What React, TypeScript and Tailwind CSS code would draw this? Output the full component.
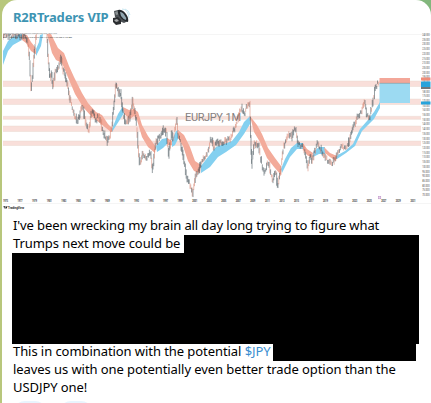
type Point = [number, number];

// Monthly price path, in chart pixels
const pricePath: Point[][] = [
  [[3, 37], [4, 34], [9, 36], [14, 34], [20, 37], [24, 35], [28, 40], [30, 60], [31.5, 87], [33, 76], [35, 50], [37, 34]],
  [[47, 34], [49, 62], [50, 78], [52, 74], [53.5, 86], [56, 72], [59, 67], [61.5, 56], [63, 68], [65, 74], [67, 82], [70, 98], [73, 110], [78, 122], [80, 114], [83, 107], [86, 122], [89, 131], [91, 118], [93, 110], [96, 120], [100, 117], [104, 133], [108, 142], [112, 131], [114, 108], [116, 88], [117, 85], [119, 94], [121, 93], [123, 110], [126, 124], [130, 119], [133, 100], [135, 110], [137, 127], [140, 163], [143, 155], [147, 157], [151, 153], [153, 170], [156, 143], [161, 137], [164, 129], [167, 133], [169, 155], [172, 134], [174, 139], [177, 118], [178, 133], [181, 143], [183, 153], [187, 177], [190, 182], [193, 193], [196, 175], [199, 172], [201, 163], [207, 155], [212, 138], [214, 147], [217, 143], [224, 142], [231, 138], [237, 123], [242, 108], [245, 113], [247, 108], [250, 103], [251, 137], [252, 165], [255, 143], [259, 147], [264, 173], [269, 163], [273, 180], [276, 170], [278, 187], [281, 172], [283, 153], [288, 134], [292, 137], [296, 128], [298, 142], [304, 147], [308, 167], [310, 157], [313, 160], [318, 143], [322, 150], [330, 163], [335, 161], [337, 155], [342, 145], [347, 149], [353, 130], [358, 118], [362, 110], [365, 101], [367, 114], [370, 118], [373, 103], [376, 87], [379, 83]],
];

const levels = [
  { y: 81, h: 5.5 },
  { y: 99, h: 5.5 },
  { y: 116.3, h: 3 },
  { y: 126, h: 5.5 },
  { y: 141, h: 4.5 },
];

const ribbons = [
  { up: true, points: '3,51 8,41 14,36 22,34 22,40 13,45 8,51 3,65' },
  { up: false, points: '22,34 27,35 31,42 35,47 37,55 31,51 26,43 22,40' },
  { up: true, points: '36,49 39,42 40,35 43,34 41,46 36,56' },
  { up: false, points: '47,34 51,34 58,48 64,53 69,66 74,77 82,93 88,103 96,112 102,115 108,124 113,129 111,132 101,124 91,116 83,107 75,94 67,75 62,63 56,60 52,53' },
  { up: true, points: '112,129 118,114 123,106 124,113 119,121 112,132' },
  { up: false, points: '123,107 129,110 134,109 138,112 142,125 148,136 156,147 155,153 148,147 142,137 137,120 134,116 130,119 124,114' },
  { up: true, points: '156,146 162,139 167,138 168,143 163,148 157,152' },
  { up: false, points: '167,138 172,141 172,145 168,145' },
  { up: true, points: '172,140 176,131 179,130 179,137 175,145 172,147' },
  { up: false, points: '178,130 184,135 190,147 195,161 201,165 200,173 194,171 188,161 183,146 178,138' },
  { up: true, points: '201,166 208,157 216,147 224,144 232,141 239,132 244,122 250,116 250,124 244,134 236,145 226,152 218,157 210,167 201,173' },
  { up: false, points: '250,116 257,125 262,134 268,148 275,158 281,166 281,175 274,167 267,158 260,142 254,132' },
  { up: true, points: '281,169 285,159 291,148 297,143 303,143 303,149 297,149 290,157 282,173' },
  { up: false, points: '303,143 307,149 313,153 312,158 307,155 303,149' },
  { up: true, points: '313,152 319,147 325,147 325,154 319,154 313,157' },
  { up: false, points: '324,147 330,153 337,156 336,161 330,157 325,153' },
  { up: true, points: '336,156 345,151 353,144 360,129 367,121 374,112 380,102 380,108 374,119 368,125 362,131 355,146 346,153 337,159' },
];

const years = Array.from({ length: 29 }, (_, i) => ({ x: 5.5 + i * 14.55, label: String(1975 + i * 2) }));
const prices = Array.from({ length: 35 }, (_, i) => ({ y: 36 + i * 4.71, label: `${240 - i * 5}.000` }));

function noise(n: number) {
  const v = Math.sin(n * 127.1) * 43758.5453;
  return v - Math.floor(v) - 0.5;
}

function buildCandles(line: Point[]) {
  const candles: { x: number; y1: number; y2: number; up: boolean }[] = [];
  for (let i = 1; i < line.length; i++) {
    const [x0, y0] = line[i - 1];
    const [x1, y1] = line[i];
    const steps = Math.max(2, Math.round((x1 - x0) / 0.8));
    for (let s = 0; s < steps; s++) {
      const x = x0 + ((x1 - x0) * s) / steps;
      const a = y0 + ((y1 - y0) * s) / steps + noise(x) * 6;
      const b = y0 + ((y1 - y0) * (s + 1)) / steps + noise(x + 3) * 6;
      candles.push({ x, y1: Math.max(34, Math.min(a, b) - 1.5), y2: Math.max(a, b) + 1.5, up: noise(x + 9) > -0.12 });
    }
  }
  return candles;
}

const candles = pricePath.flatMap(buildCandles);

function SpeakerIcon() {
  return (
    <svg className="h-[19px] w-[19px]" viewBox="0 0 19 19">
      <path d="M2 3l4-1 4 4 6 7-4 2-5-2-4-4z" fill="#4b5054" />
      <path d="M3 4l3-1 2 3-4 1z" fill="#8b9193" />
      <path d="M6 2q4-1 8 4 3 4 2 8-5-1-8-5Q5 5 6 2z" fill="#23282c" />
      <path d="M8 4q3 0 5 4 2 2 1 4-3-1-5-4z" fill="#8fa5af" />
      <path d="M1 10l5-1 3 3v4l-5 1-3-3z" fill="#2c2e31" />
      <path d="M2 12l3-1 2 2-3 1z" fill="#a6a8a9" />
      <path d="M10 1q6 0 7 9M13 1q4 1 5 6" fill="none" stroke="#c3e4ef" strokeWidth="0.9" />
    </svg>
  );
}

function PriceChart() {
  return (
    <svg className="block h-[180px] w-[428px]" viewBox="3 33 428 180" fontFamily="Roboto, sans-serif">
      <path d="M3 34.5H431M3 203.5H431" stroke="#f1f1f1" strokeWidth="0.7" />
      {levels.map((level) => (
        <g key={level.y}>
          <rect x="3" y={level.y} width="418" height={level.h} fill="#f9dfda" />
          <path d={`M3 ${level.y}H421M3 ${level.y + level.h}H421`} stroke="#e6d3ca" strokeWidth="0.4" />
        </g>
      ))}
      <text x="185" y="121" fontSize="11" fill="#85807f" textLength="56">EURJPY, 1M</text>
      {ribbons.map((r) => (
        <polygon key={r.points} points={r.points} fill={r.up ? '#84d0f0' : '#f3ab9a'} />
      ))}
      {candles.map((c, i) => (
        <path key={i} d={`M${c.x} ${c.y1}V${c.y2}`} stroke={c.up ? '#3c4b52' : '#d5806c'} strokeWidth="0.6" strokeOpacity="0.9" />
      ))}
      <rect x="379.5" y="78" width="30.5" height="5" fill="#f3a799" />
      <rect x="379.5" y="83" width="30.5" height="20" fill="#9cdaf2" />
      <path d="M379.5 83.3H410" stroke="#8a8f90" strokeWidth="0.6" />
      <text x="3" y="34.2" fontSize="2.3" fill="#777" textLength="54" lengthAdjust="spacingAndGlyphs">TradingView chart published on TradingView.com, 2024 UTC</text>
      <text x="3" y="37.5" fontSize="2.3" fill="#444" textLength="69" lengthAdjust="spacingAndGlyphs">Euro / Japanese Yen, 1M, FXCM  O163.248 H164.302 L162.600 C163.880</text>
      {prices.map((p) => (
        <text key={p.label} x="422.3" y={p.y} fontSize="2.7" fill="#444" textLength="7.2" lengthAdjust="spacingAndGlyphs">{p.label}</text>
      ))}
      <rect x="421" y="77.5" width="9.5" height="3" fill="#ef8c79" />
      <rect x="421" y="81.5" width="9.5" height="5.5" fill="#27a3db" />
      <rect x="421" y="87" width="9.5" height="2" fill="#72777a" />
      <rect x="421" y="101.5" width="9.5" height="3" fill="#27a3db" />
      {years.map((y) => (
        <text key={y.label} x={y.x} y="202.1" fontSize="2.8" fontWeight="700" fill="#333" textAnchor="middle" textLength="5" lengthAdjust="spacingAndGlyphs">{y.label}</text>
      ))}
      <rect x="378.4" y="196.4" width="2.4" height="2.4" fill="#ead6ee" stroke="#b98ac3" strokeWidth="0.5" />
      <path d="M3.5 206.3h2v2.3h-1v-1.4h-1zM6.4 206.3h1.2l-1 2.3h-.9z" fill="#111" />
      <text x="8" y="208.6" fontSize="3" fontWeight="700" fill="#222" textLength="16" lengthAdjust="spacingAndGlyphs">TradingView</text>
    </svg>
  );
}

export default function App() {
  return (
    <div className="h-[403px] w-[431px] overflow-hidden bg-gradient-to-r from-[#b8c77c] to-[#82b77d] pl-[2px] font-['Noto_Sans',sans-serif]">
      <div className="h-full overflow-hidden rounded-t-[15px] bg-white">
        <header className="flex h-[33px] items-center gap-[4px] pl-[11px] pt-[1px]">
          <h1 className="w-[95px] whitespace-nowrap text-[13px] font-bold leading-[18px] tracking-[-0.18px] text-[#3d94b3]">R2RTraders VIP</h1>
          <SpeakerIcon />
        </header>
        <div className="pl-px">
          <PriceChart />
        </div>

        {/* Message body */}
        <div className="pl-[10px] pt-[3px] text-[13px] leading-[18px] tracking-[-0.07px] text-black">
          <p className="whitespace-nowrap pl-px tracking-[-0.115px]">I've been wrecking my brain all day long trying to figure what</p>
          <div className="flex h-[18px]">
            <p className="w-[172px] whitespace-nowrap pl-px">Trumps next move could be</p>
            <div className="mt-px h-[18px] w-[235px] bg-black" />
          </div>
          <div className="mt-px h-[91px] w-[407px] bg-black" />
          <div className="-mt-[2px] flex h-[18px]">
            <p className="w-[261px] whitespace-nowrap pl-px">
              This in combination with the potential <span className="text-[#3b8ed0]">$JPY</span>
            </p>
            <div className="mt-px h-[18px] w-[143px] bg-black" />
          </div>
          <p className="whitespace-nowrap pl-px">leaves us with one potentially even better trade option than the</p>
          <p className="pl-px">USDJPY one!</p>
        </div>

        {/* Reactions */}
        <div className="flex gap-[12px] pl-[11px] pt-[5px]">
          <div className="h-[24px] w-[34px] rounded-full bg-[#e8f4fd]" />
          <div className="h-[24px] w-[34px] rounded-full bg-[#e8f4fd]" />
        </div>
      </div>
    </div>
  );
}
